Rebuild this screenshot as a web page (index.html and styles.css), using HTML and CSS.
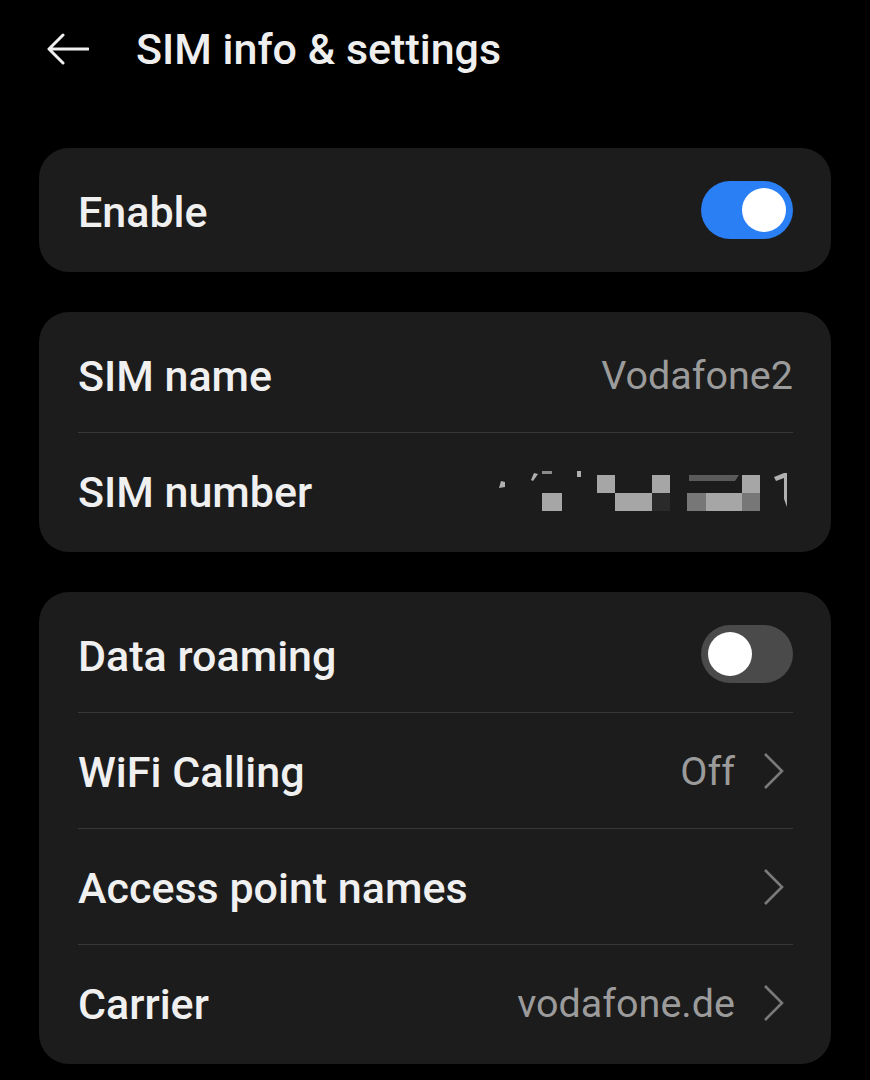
FILE: index.html
```html
<!DOCTYPE html>
<html lang="en">
<head>
<meta charset="utf-8">
<title>SIM info &amp; settings</title>
<link rel="stylesheet" href="styles.css">
</head>
<body>
<header class="topbar">
  <svg class="back" width="42" height="32" viewBox="0 0 42 32" aria-hidden="true">
    <path d="M41 16H3M16 2L2 16l14 14" fill="none" stroke="#f0f0f0" stroke-width="3" stroke-linecap="round" stroke-linejoin="round"/>
  </svg>
  <h1 class="title">SIM info &amp; settings</h1>
</header>
<main class="content">
  <section class="card">
    <div class="row">
      <span class="label">Enable</span>
      <span class="switch on"><span class="knob"></span></span>
    </div>
  </section>
  <section class="card">
    <div class="row">
      <span class="label">SIM name</span>
      <span class="value">Vodafone2</span>
    </div>
    <div class="row">
      <span class="label">SIM number</span>
      <svg class="redacted" width="296" height="40" viewBox="-8 0 296 40" aria-hidden="true">
        <path d="M2 10l4 1v5l-6 1" fill="#b0b0b0"/>
        <path d="M32 9l3-7 4 1-5 7z" fill="#b0b0b0"/>
        <rect x="43" y="0" width="10" height="3" fill="#8a8a8a"/>
        <rect x="43" y="22" width="20" height="19" fill="#a6a6a6"/>
        <rect x="78" y="0" width="4" height="6" fill="#b0b0b0"/>
        <rect x="98" y="4" width="18" height="18" fill="#a6a6a6"/>
        <rect x="116" y="22" width="37" height="19" fill="#a6a6a6"/>
        <rect x="153" y="4" width="18" height="18" fill="#a6a6a6"/>
        <rect x="153" y="22" width="18" height="19" fill="#2a2a2a"/>
        <rect x="188" y="22" width="19" height="19" fill="#777"/>
        <rect x="207" y="22" width="36" height="19" fill="#a6a6a6"/>
        <path d="M190 4h50l-4 6h-46z" fill="#5a5a5a"/>
        <rect x="243" y="4" width="18" height="18" fill="#a6a6a6"/>
        <rect x="243" y="22" width="18" height="19" fill="#777"/>
        <path d="M275 6l10-4h3v34l-3-8v-21l-8 3z" fill="#b0b0b0"/>
      </svg>
    </div>
  </section>
  <section class="card">
    <div class="row">
      <span class="label">Data roaming</span>
      <span class="switch"><span class="knob"></span></span>
    </div>
    <div class="row">
      <span class="label">WiFi Calling</span>
      <span class="trail"><span class="value">Off</span><svg class="chev" width="30" height="36" viewBox="0 0 30 36" aria-hidden="true"><path d="M2 1l17 17L2 35" fill="none" stroke="#7a7a7a" stroke-width="2.6"/></svg></span>
    </div>
    <div class="row">
      <span class="label">Access point names</span>
      <span class="trail"><svg class="chev" width="30" height="36" viewBox="0 0 30 36" aria-hidden="true"><path d="M2 1l17 17L2 35" fill="none" stroke="#7a7a7a" stroke-width="2.6"/></svg></span>
    </div>
    <div class="row">
      <span class="label">Carrier</span>
      <span class="trail"><span class="value">vodafone.de</span><svg class="chev" width="30" height="36" viewBox="0 0 30 36" aria-hidden="true"><path d="M2 1l17 17L2 35" fill="none" stroke="#7a7a7a" stroke-width="2.6"/></svg></span>
    </div>
  </section>
</main>
</body>
</html>
```
FILE: styles.css
```css
html, body {
  margin: 0;
  padding: 0;
  background: #000;
}
body {
  font-family: Roboto, "Noto Sans", "Liberation Sans", sans-serif;
  color: #f0f0f0;
}
.topbar {
  height: 98px;
  display: flex;
  align-items: center;
  padding-left: 47px;
  gap: 47px;
}
.back {
  display: block;
  flex: none;
}
.title {
  margin: 0;
  font-size: 43px;
  font-weight: 500;
  color: #efefef;
}
.content {
  display: flex;
  flex-direction: column;
  gap: 40px;
  padding: 50px 39px;
}
.card {
  background: #1c1c1c;
  border-radius: 30px;
  padding: 4px 38px 4px 39px;
}
.row {
  height: 116px;
  display: flex;
  align-items: center;
  justify-content: space-between;
}
.row + .row {
  border-top: 1px solid #383838;
  height: 115px;
}
.label {
  font-size: 43px;
  font-weight: 500;
  color: #f0f0f0;
  padding-top: 3px;
}
.value {
  font-size: 39.5px;
  font-weight: 400;
  color: #9b9b9b;
  padding-top: 2px;
}
.trail {
  display: flex;
  align-items: center;
  gap: 28px;
}
.chev {
  display: block;
}
.redacted {
  display: block;
  margin-right: 6px;
}
.switch {
  width: 92px;
  height: 58px;
  border-radius: 29px;
  background: #4a4a4a;
  display: flex;
  align-items: center;
  padding: 0 7px;
  box-sizing: border-box;
}
.switch.on {
  background: #2b7ff4;
  justify-content: flex-end;
}
.knob {
  width: 44px;
  height: 44px;
  border-radius: 50%;
  background: #fff;
}
```
